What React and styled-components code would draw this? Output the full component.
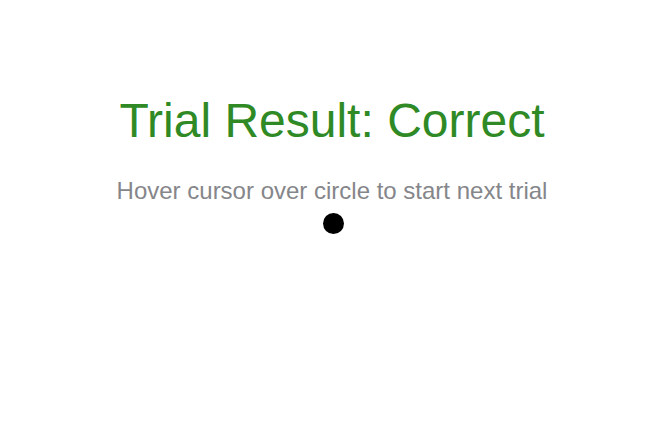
import React from "react";
import styled, { createGlobalStyle } from "styled-components";

const GlobalStyle = createGlobalStyle`
  html, body {
    margin: 0;
    padding: 0;
    background: #ffffff;
    font-family: "Liberation Sans", Arial, sans-serif;
  }
`;

const Page = styled.div`
  width: 664px;
  height: 440px;
  display: flex;
  flex-direction: column;
  align-items: center;
  padding-top: 93px;
  box-sizing: border-box;
`;

const Title = styled.h1`
  margin: 0;
  font-size: 48px;
  line-height: 55px;
  font-weight: normal;
  color: #2f8a26;
`;

const Hint = styled.p`
  margin: 29px 0 0;
  font-size: 24px;
  line-height: 28px;
  color: #85868a;
`;

const Target = styled.div`
  margin-top: 8px;
  margin-left: 2px;
  width: ${(p) => p.size}px;
  height: ${(p) => p.size}px;
  border-radius: 50%;
  background: #000;
`;

export default function App() {
  return (
    <>
      <GlobalStyle />
      <Page>
        <Title>Trial Result: Correct</Title>
        <Hint>Hover cursor over circle to start next trial</Hint>
        <Target size={21} />
      </Page>
    </>
  );
}
